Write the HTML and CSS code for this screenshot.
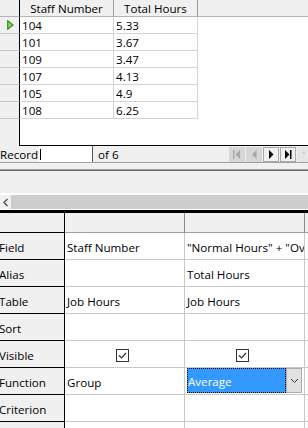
FILE: index.html
```html
<!DOCTYPE html>
<html>
<head>
<meta charset="utf-8">
<link rel="stylesheet" href="styles.css">
</head>
<body>
<div class="browser">
  <div class="trow thead">
    <div class="trh"></div>
    <div class="tc1">Staff Number</div>
    <div class="tc2">Total Hours</div>
    <div class="tfill"></div>
  </div>
  <div class="trow">
    <div class="trh"><svg class="cur" width="7" height="10" viewBox="0 0 7 10"><polygon points="0.7,0.7 6,5 0.7,9.3" fill="#9ccc65" stroke="#3f8f1f" stroke-width="1.2"/></svg></div>
    <div class="tc1">104</div><div class="tc2">5.33</div><div class="tfill"></div>
  </div>
  <div class="trow"><div class="trh"></div><div class="tc1">101</div><div class="tc2">3.67</div><div class="tfill"></div></div>
  <div class="trow"><div class="trh"></div><div class="tc1">109</div><div class="tc2">3.47</div><div class="tfill"></div></div>
  <div class="trow"><div class="trh"></div><div class="tc1">107</div><div class="tc2">4.13</div><div class="tfill"></div></div>
  <div class="trow"><div class="trh"></div><div class="tc1">105</div><div class="tc2">4.9</div><div class="tfill"></div></div>
  <div class="trow"><div class="trh"></div><div class="tc1">108</div><div class="tc2">6.25</div><div class="tfill"></div></div>
  <div class="tempty"><div class="trh"></div><div class="tblank"></div></div>
</div>

<div class="recbar">
  <span class="reclabel">Record</span>
  <span class="recinput"><span class="caret"></span></span>
  <span class="recof">of 6</span>
  <div class="nav">
    <span class="nbtn dis"><svg width="16" height="15" viewBox="0 0 16 15"><rect x="4" y="3" width="1.5" height="9" fill="#a8a8a8"/><polygon points="11,3 6.5,7.5 11,12" fill="#a8a8a8"/></svg></span>
    <span class="nbtn dis"><svg width="16" height="15" viewBox="0 0 16 15"><polygon points="10.5,3 6,7.5 10.5,12" fill="#a8a8a8"/></svg></span>
    <span class="nbtn on"><svg width="14" height="13" viewBox="0 0 14 13"><polygon points="5,2 9.5,6.5 5,11" fill="#000"/></svg></span>
    <span class="nbtn on"><svg width="14" height="13" viewBox="0 0 14 13"><polygon points="4,2 8.5,6.5 4,11" fill="#000"/><rect x="9" y="2" width="1.5" height="9" fill="#000"/></svg></span>
    <span class="nbtn dis last"><svg width="11" height="15" viewBox="0 0 11 15"><text x="5" y="10" font-size="9" fill="#c8c8c8" font-family="Liberation Sans">*</text></svg></span>
  </div>
</div>

<div class="splitter"></div>
<div class="splitdark"></div>
<div class="gap"></div>
<div class="whiteline"></div>
<div class="hscroll">
  <span class="sarrow"><svg width="8" height="9" viewBox="0 0 8 9"><path d="M5.5 1 L2 4.5 L5.5 8" fill="none" stroke="#505050" stroke-width="1.4"/></svg></span>
  <span class="strack"></span>
</div>
<div class="whiteline1"></div>
<div class="blackline"></div>

<div class="design">
  <div class="drow dhead">
    <div class="drh"></div><div class="dc"></div><div class="dc"></div><div class="dfill"></div>
  </div>
  <div class="drow">
    <div class="drh">Field</div><div class="dc">Staff Number</div><div class="dc">"Normal Hours" + "Overtime Hours"</div><div class="dfill"></div>
  </div>
  <div class="drow">
    <div class="drh">Alias</div><div class="dc"></div><div class="dc">Total Hours</div><div class="dfill"></div>
  </div>
  <div class="drow">
    <div class="drh">Table</div><div class="dc">Job Hours</div><div class="dc">Job Hours</div><div class="dfill"></div>
  </div>
  <div class="drow">
    <div class="drh">Sort</div><div class="dc"></div><div class="dc"></div><div class="dfill"></div>
  </div>
  <div class="drow">
    <div class="drh">Visible</div>
    <div class="dc center"><svg class="chk" width="13" height="13" viewBox="0 0 13 13"><rect x="0.5" y="0.5" width="12" height="12" fill="#fff" stroke="#333"/><path d="M3 6.5 L5.5 9 L10 4" fill="none" stroke="#333" stroke-width="1.2"/></svg></div>
    <div class="dc center"><svg class="chk" width="13" height="13" viewBox="0 0 13 13"><rect x="0.5" y="0.5" width="12" height="12" fill="#fff" stroke="#333"/><path d="M3 6.5 L5.5 9 L10 4" fill="none" stroke="#333" stroke-width="1.2"/></svg></div>
    <div class="dfill"></div>
  </div>
  <div class="drow">
    <div class="drh">Function</div><div class="dc">Group</div>
    <div class="dc combo-cell">
      <div class="combo">
        <span class="combo-val">Average</span>
        <span class="combo-btn"><svg width="9" height="6" viewBox="0 0 9 6"><path d="M1 1 L4.5 4.5 L8 1" fill="none" stroke="#333" stroke-width="1"/></svg></span>
      </div>
    </div>
    <div class="dfill"></div>
  </div>
  <div class="drow">
    <div class="drh">Criterion</div><div class="dc"></div><div class="dc"></div><div class="dfill"></div>
  </div>
  <div class="drow">
    <div class="drh"></div><div class="dc"></div><div class="dc"></div><div class="dfill"></div>
  </div>
</div>
</body>
</html>
```

FILE: styles.css
```css
* { box-sizing: border-box; }
html, body {
  margin: 0;
  padding: 0;
}
body {
  width: 308px;
  height: 428px;
  overflow: hidden;
  background: #f0f0f0;
  font-family: "Open Sans", "Noto Sans", sans-serif;
  font-size: 11.6px;
  color: #000;
}

/* ---------- top data browser ---------- */
.browser {
  height: 146px;
  display: flex;
  flex-direction: column;
  background: #fff;
}
.trow {
  display: flex;
  height: 17px;
  flex: none;
}
.trow > div {
  display: flex;
  align-items: center;
  white-space: nowrap;
  overflow: hidden;
}
.trh {
  width: 20px;
  flex: none;
  background: #f0f0f0;
  border-right: 1px solid #000;
  border-bottom: 1px solid #c8c8c8;
  justify-content: center;
  padding-left: 1px;
}
.tc1 {
  width: 94px;
  flex: none;
  border-right: 1px solid #d4d4d4;
  border-bottom: 1px solid #d4d4d4;
  padding-left: 2px;
}
.tc2 {
  width: 84px;
  flex: none;
  border-right: 1px solid #d4d4d4;
  border-bottom: 1px solid #d4d4d4;
  padding-left: 2px;
}
.tfill { flex: 1; }
.thead > div {
  background: #f0f0f0;
  border-bottom: 1px solid #b4b4b4;
}
.thead .tc1, .thead .tc2 {
  justify-content: center;
  padding-left: 0;
  border-right-color: #9a9a9a;
}
.thead .trh { border-bottom-color: #b4b4b4; }
.tempty {
  flex: 1;
  display: flex;
}
.tempty .trh { border-bottom: none; }
.tblank { flex: 1; background: #fff; border-bottom: 1px solid #000; }

/* ---------- record bar ---------- */
.recbar {
  height: 16px;
  display: flex;
  align-items: center;
  background: #f0f0f0;
}
.reclabel { flex: none; white-space: nowrap; padding-right: 1px; }
.recinput {
  width: 54px;
  height: 16px;
  flex: none;
  background: #fff;
  border-right: 1px solid #555;
  display: flex;
  align-items: center;
  padding-left: 1px;
}
.caret {
  width: 1px;
  height: 11px;
  background: #000;
}
.recof { margin-left: 5px; }
.nav {
  margin-left: auto;
  display: flex;
  gap: 1px;
  align-self: flex-start;
  padding-top: 1px;
}
.nbtn {
  width: 16px;
  height: 15px;
  display: flex;
  align-items: center;
  justify-content: center;
}
.nbtn.dis { background: #d6d6d6; }
.nbtn.on {
  background: #f0f0f0;
  border: 1px solid #a8a8a8;
}
.nbtn.last { width: 11px; background: #e6e6e6; }

/* ---------- splitter and scrollbar ---------- */
.splitter {
  height: 8px;
  border-top: 1px solid #a0a0a0;
  border-bottom: 1px solid #a0a0a0;
  background: #f0f0f0;
}
.splitdark { height: 1px; background: #696969; }
.gap { height: 22px; background: #f0f0f0; }
.whiteline { height: 2px; background: #fff; }
.hscroll {
  height: 14px;
  display: flex;
}
.sarrow {
  width: 11px;
  background: #f0f0f0;
  display: flex;
  align-items: center;
  justify-content: center;
}
.strack { flex: 1; background: #cdcdcd; }
.whiteline1 { height: 1px; background: #fff; }
.blackline { height: 3px; background: #000; }

/* ---------- query design grid ---------- */
.design {
  background: #fff;
}
.drow {
  display: flex;
  height: 27px;
}
.drow > div {
  display: flex;
  align-items: center;
  white-space: nowrap;
  overflow: hidden;
  padding-top: 2px;
}
.drh {
  width: 65px;
  flex: none;
  background: #f0f0f0;
  border-right: 1px solid #000;
  border-bottom: 1px solid #000;
  text-indent: -1px;
  padding-left: 0;
}
.dc {
  width: 120px;
  flex: none;
  border-right: 1px solid #c8c8c8;
  border-bottom: 1px solid #c8c8c8;
  padding-left: 2px;
}
.dfill {
  flex: 1;
  border-bottom: 1px solid #c8c8c8;
}
.dhead { height: 20px; }
.dhead > div {
  background: #f0f0f0;
  padding-top: 0;
}
.dhead .dc {
  border-right-color: #8c8c8c;
  border-bottom-color: #a0a0a0;
}
.dhead .dfill { border-bottom-color: #a0a0a0; }
.dc.center {
  justify-content: center;
  padding-left: 0;
  padding-right: 4px;
}
.dc.combo-cell {
  padding: 0 2px 1px 2px;
  align-items: stretch;
}
.combo {
  flex: 1;
  display: flex;
}
.combo-val {
  flex: 1;
  background: #3399ff;
  color: #fff;
  display: flex;
  align-items: center;
  padding-left: 1px;
  padding-top: 2px;
  outline: 1px dotted #000;
  outline-offset: -1px;
}
.combo-btn {
  width: 16px;
  background: #e1e1e1;
  border: 1px solid #adadad;
  display: flex;
  align-items: center;
  justify-content: center;
}
```
